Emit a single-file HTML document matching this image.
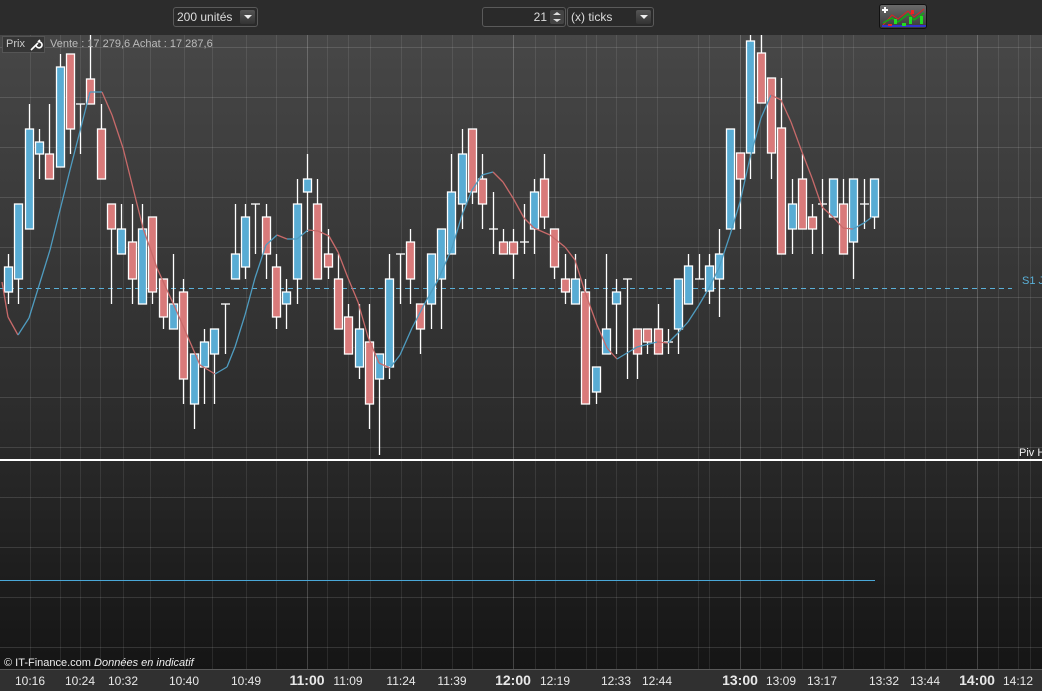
<!DOCTYPE html>
<html><head><meta charset="utf-8">
<style>
html,body{margin:0;padding:0;width:1042px;height:691px;overflow:hidden;background:#2b2b2b;font-family:"Liberation Sans",Arial,sans-serif;}
#top{position:absolute;left:0;top:0;width:1042px;height:35px;background:#2c2c2c;}
.box{position:absolute;border:1px solid #5a5a5a;border-radius:3px;background:#2a2a2a;color:#ddd;font-size:12px;line-height:18px;box-sizing:border-box;height:20px;}
.dd{position:absolute;top:2px;width:15px;height:14px;border-radius:2px;background:linear-gradient(#555,#333);}
.dd:after{content:"";position:absolute;left:4px;top:5px;border-left:4px solid transparent;border-right:4px solid transparent;border-top:4px solid #eee;}
#chart{position:absolute;left:0;top:35px;width:1042px;height:634px;background:linear-gradient(#474747 0%,#2c2c2c 60%,#151515 100%);}
#axis{position:absolute;left:0;top:669px;width:1042px;height:22px;background:#303030;border-top:1px solid #5a5a5a;box-sizing:border-box;}
#axis span{position:absolute;top:4px;color:#e8e8e8;font-size:12px;transform:translateX(-50%);}
#axis span.b{font-weight:bold;font-size:14px;top:2px;}
.lbl{position:absolute;white-space:nowrap;font-size:11px;}
</style></head><body>
<div id="top">
  <div class="box" style="left:173px;top:7px;width:85px;padding-left:3px;">200 unités<div class="dd" style="left:66px"></div></div>
  <div class="box" style="left:482px;top:7px;width:84px;text-align:right;padding-right:18px;">21
    <div style="position:absolute;left:67px;top:2px;width:14px;height:14px;border-radius:2px;background:#444;">
      <div style="position:absolute;left:3px;top:2px;border-left:4px solid transparent;border-right:4px solid transparent;border-bottom:3px solid #ddd;"></div>
      <div style="position:absolute;left:3px;top:9px;border-left:4px solid transparent;border-right:4px solid transparent;border-top:3px solid #ddd;"></div>
    </div></div>
  <div class="box" style="left:567px;top:7px;width:87px;padding-left:3px;">(x) ticks<div class="dd" style="left:68px"></div></div>
  <div style="position:absolute;left:879px;top:4px;width:48px;height:25px;border:1px solid #111;border-radius:3px;background:linear-gradient(#6a6a6a,#3a3a3a);box-sizing:border-box;overflow:hidden;">
    <svg width="48" height="25" viewBox="0 0 48 25">
      <path d="M3 20 L12 10 L18 14 L28 6 L34 12 L44 4" stroke="#d22" stroke-width="1" fill="none"/>
      <path d="M3 18 L12 13 L18 17 L28 9 L34 15 L44 8" stroke="#1a1" stroke-width="1.5" fill="none"/>
      <rect x="14" y="14" width="3" height="5" fill="#2d2"/><rect x="29" y="12" width="3" height="7" fill="#2d2"/><rect x="40" y="11" width="3" height="8" fill="#2d2"/>
      <rect x="31" y="5" width="3" height="4" fill="#e22"/>
      <rect x="2" y="20" width="44" height="2" fill="#33c"/>
      <rect x="8" y="19" width="4" height="2" fill="#e22"/><rect x="22" y="18" width="4" height="3" fill="#2d2"/>
      <path d="M5 2v6M2 5h6" stroke="#fff" stroke-width="2"/>
    </svg>
  </div>
</div>
<div id="chart">
<svg id="svg" width="1042" height="634" viewBox="0 35 1042 634" style="position:absolute;left:0;top:0"></svg>
<div style="position:absolute;left:2px;top:1px;width:43px;height:17px;border:1px solid #555;background:#363636;box-sizing:border-box;color:#ccc;font-size:11px;line-height:15px;padding-left:3px;">Prix
<svg width="14" height="14" viewBox="0 0 14 14" style="position:absolute;left:26px;top:1px"><path d="M2 12 L7 7 M7 7 A3 3 0 1 0 9 4 L11 2 M7 7 L9 5" stroke="#fff" stroke-width="1.6" fill="none"/></svg></div>
<div class="lbl" style="left:50px;top:3px;color:#bbb;">Vente : 17 279,6 Achat : 17 287,6</div>
<div class="lbl" style="left:1022px;top:240px;color:#5ab0d8;">S1 J</div>
<div class="lbl" style="left:1019px;top:412px;color:#eee;">Piv H</div>
<div class="lbl" style="left:4px;top:622px;color:#eee;">© IT-Finance.com <i>Données en indicatif</i></div>
</div>
<div id="axis">
<span style="left:30px">10:16</span><span style="left:80px">10:24</span><span style="left:123px">10:32</span><span style="left:184px">10:40</span><span style="left:246px">10:49</span><span class="b" style="left:307px">11:00</span><span style="left:348px">11:09</span><span style="left:401px">11:24</span><span style="left:452px">11:39</span><span class="b" style="left:513px">12:00</span><span style="left:555px">12:19</span><span style="left:616px">12:33</span><span style="left:657px">12:44</span><span class="b" style="left:740px">13:00</span><span style="left:781px">13:09</span><span style="left:822px">13:17</span><span style="left:884px">13:32</span><span style="left:925px">13:44</span><span class="b" style="left:977px">14:00</span><span style="left:1018px">14:12</span>
</div>
<script>
var s='';
var vl=[30,60,80,100,123,150,184,212,246,276,327,348,370,401,421,452,472,535,555,586,596,616,636,657,698,709,760,781,802,822,843,853,884,904,925,946,998,1018,1030];
vl.forEach(function(x){s+='<line x1="'+(x+.5)+'" y1="35" x2="'+(x+.5)+'" y2="669" stroke="rgba(255,255,255,0.09)"/>';});
[307,513,740,977].forEach(function(x){s+='<line x1="'+(x+.5)+'" y1="35" x2="'+(x+.5)+'" y2="669" stroke="rgba(255,255,255,0.2)"/>';});
[47,97,147,197,247,297,347,397,447,497,547,597,647].forEach(function(y){s+='<line x1="0" y1="'+(y+.5)+'" x2="1042" y2="'+(y+.5)+'" stroke="rgba(255,255,255,0.13)"/>';});
s+='<line x1="0" y1="288.5" x2="1012" y2="288.5" stroke="#5ab0d8" stroke-dasharray="5,4"/>';
s+='<line x1="0" y1="460" x2="1042" y2="460" stroke="#fff" stroke-width="2"/>';
s+='<line x1="0" y1="580.5" x2="875" y2="580.5" stroke="#4aa8d8"/>';
var C=[['b',267,292,254,304],['b',204,279,204,304],['b',129,229,104,229],['b',142,154,129,179],['r',154,179,104,179],['b',67,167,54,167],['r',54,129,54,154],['d',104,104,104,154],['r',79,104,35,104],['r',129,179,104,179],
['r',204,229,204,304],['b',229,254,204,254],['r',242,279,204,304],['b',229,304,204,304],['r',217,292,217,304],['r',279,317,279,329],['b',304,329,254,329],['r',292,379,279,404],['b',354,404,354,429],['b',342,367,329,404],
['b',329,354,329,404],['d',304,304,304,354],['b',254,279,204,279],['b',217,267,204,279],['d',204,204,204,254],['r',217,254,204,279],['r',267,317,254,329],['b',292,304,279,329],['b',204,279,179,304],['b',179,192,154,232],
['r',204,279,179,279],['r',254,267,229,279],['r',279,329,254,329],['r',317,354,304,354],['b',329,367,304,379],['r',342,404,304,429],['b',354,379,354,455],['b',279,367,254,379],['d',254,254,254,304],['r',242,279,229,304],
['r',304,329,304,354],['b',254,304,254,329],['b',229,279,229,329],['b',192,254,154,254],['b',154,204,129,229],['r',129,192,129,204],['r',179,204,154,229],['d',229,229,192,254],['r',242,254,229,254],['r',242,254,229,279],
['d',242,242,204,254],['b',192,229,179,254],['r',179,217,154,229],['r',229,267,229,279],['r',279,292,254,304],['b',279,304,254,304],['r',292,404,279,404],['b',367,392,367,404],['b',329,354,254,354],['b',292,304,279,354],
['d',279,279,279,379],['r',329,354,329,379],['r',329,342,329,354],['r',329,354,304,354],['d',342,342,329,354],['b',279,329,279,354],['b',266,304,254,304],['d',279,279,254,279],['b',266,291,254,304],['b',254,279,229,317],
['b',129,229,129,229],['r',153,179,153,229],['b',41,153,35,179],['r',53,103,35,103],['r',78,153,78,179],['r',128,254,78,254],['b',204,229,179,254],['r',179,229,154,229],['r',217,229,204,254],['d',204,204,179,254],
['b',179,217,179,217],['r',204,254,179,254],['b',179,242,179,279],['d',204,204,179,229],['b',179,217,179,229]];
C.forEach(function(c,i){var x=Math.round(8+i*10.31)+.5;
 s+='<line x1="'+x+'" y1="'+c[3]+'" x2="'+x+'" y2="'+c[4]+'" stroke="#fff" stroke-width="1.3"/>';
 if(c[0]=='d'){s+='<line x1="'+(x-4.5)+'" y1="'+c[1]+'" x2="'+(x+4.5)+'" y2="'+c[1]+'" stroke="#fff" stroke-width="1.3"/>';}
 else s+='<rect x="'+(x-4)+'" y="'+c[1]+'" width="8" height="'+Math.max(c[2]-c[1],3)+'" fill="'+(c[0]=='b'?'#58acd4':'#d97a7a')+'" stroke="#fff" stroke-width="1.3"/>';
});
var P=[[2,282],[8,317],[18,335],[29,318],[50,250],[70,170],[90,92],[102,92],[112,115],[123,148],[143,228],[157,268],[177,312],[200,365],[215,374],[227,367],[235,347],[245,315],[255,278],[266,245],[277,235],[287,239],[297,239],[308,230],[318,231],[329,236],[338,252],[348,278],[358,302],[368,337],[379,363],[390,368],[400,355],[412,328],[425,303],[438,280],[452,248],[462,215],[472,190],[482,175],[493,172],[503,182],[513,198],[524,218],[534,228],[550,235],[565,247],[575,260],[585,292],[597,325],[607,348],[617,359],[627,353],[637,347],[657,342],[668,343],[678,333],[688,322],[699,305],[709,288],[719,268],[730,235],[740,202],[750,158],[761,118],[771,95],[781,100],[791,122],[802,152],[812,178],[822,207],[833,217],[843,228],[853,229],[864,223],[872,217]];
for(var i=1;i<P.length;i++){var a=P[i-1],b=P[i];s+='<line x1="'+a[0]+'" y1="'+a[1]+'" x2="'+b[0]+'" y2="'+b[1]+'" stroke="'+(b[1]<=a[1]?'#4f9cc0':'#c86a6a')+'" stroke-width="1.3"/>';}
document.getElementById('svg').innerHTML=s;
</script>
</body></html>
